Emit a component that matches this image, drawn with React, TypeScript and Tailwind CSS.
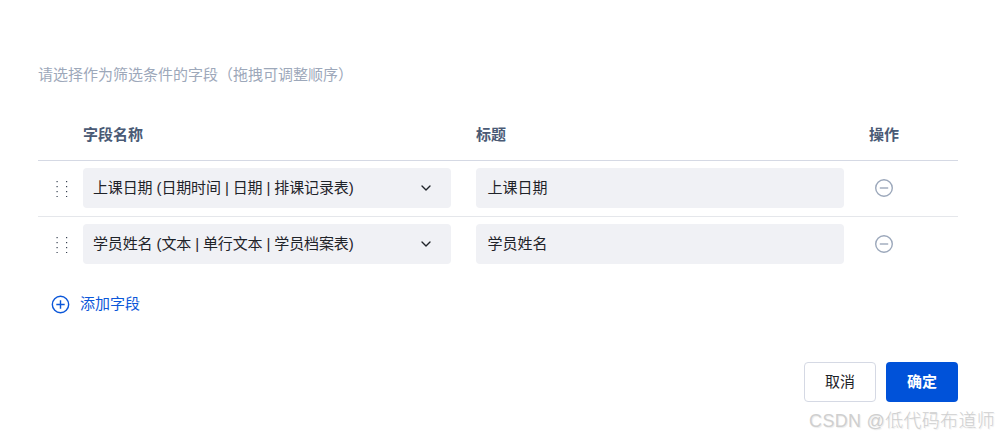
import { ChevronDown } from 'lucide-react';

const font = { fontFamily: '"Liberation Sans", "Noto Sans CJK SC", sans-serif' };

function DragHandle() {
  return (
    <svg width="12" height="17" viewBox="0 0 12 17" className="text-[#374151]">
      {[0, 1, 2, 3].map((i) => (
        <g key={i} fill="currentColor">
          <rect x="0.5" y={i * 5 + 1} width="1.2" height="1.2" />
          <rect x="10" y={i * 5 + 1} width="1.2" height="1.2" />
        </g>
      ))}
    </svg>
  );
}

function Row({ field, title }: { field: string; title: string }) {
  return (
    <div className="grid grid-cols-[45px_368px_368px_1fr] h-[56px] pt-[7px] items-start border-b border-[#e5e7eb] text-[15px] text-[#1f2329]">
      <div className="flex justify-center h-10 items-center pl-[2px]">
        <DragHandle />
      </div>
      <div className="h-10 rounded bg-[#f0f1f5] flex items-center justify-between pl-[10px] pr-[17px]">
        <span className="tracking-[-0.13px]">{field}</span>
        <ChevronDown className="w-4 h-4 text-[#1f2329]" strokeWidth={2} />
      </div>
      <div className="h-10 rounded bg-[#f0f1f5] flex items-center pl-[11.5px] ml-[25px] -mr-[25px]">
        <span>{title}</span>
      </div>
      <div className="flex h-10 items-center pl-[55px]">
        <svg width="20" height="20" viewBox="0 0 20 20" fill="none" stroke="#9ca8bb" strokeWidth="1.4">
          <circle cx="10" cy="10" r="8.3" />
          <path d="M5.8 10h8.4" />
        </svg>
      </div>
    </div>
  );
}

export default function App() {
  return (
    <div className="relative w-[998px] h-[439px] bg-white overflow-hidden" style={font}>
      <div className="pl-[38px] pr-[40px] pt-[65px]">
        <p className="text-[15px] leading-[20px] text-[#9da8ba]">请选择作为筛选条件的字段（拖拽可调整顺序）</p>

        <div className="grid grid-cols-[45px_393px_393px_1fr] mt-[26px] h-[50px] items-center border-b border-[#d5d9e4] text-[15px] font-bold text-[#4a5a75]">
          <div />
          <div>字段名称</div>
          <div>标题</div>
          <div>操作</div>
        </div>

        <Row field="上课日期 (日期时间 | 日期 | 排课记录表)" title="上课日期" />
        <div className="[&>div]:border-b-0">
          <Row field="学员姓名 (文本 | 单行文本 | 学员档案表)" title="学员姓名" />
        </div>

        <div className="flex items-center gap-[10px] mt-[13px] pl-[13px] h-[36px] text-[15px] text-[#0b57d9]">
          <svg width="19" height="19" viewBox="0 0 20 20" fill="none" stroke="#0b57d9" strokeWidth="1.5">
            <circle cx="10" cy="10" r="8.6" />
            <path d="M5.6 10h8.8M10 5.6v8.8" />
          </svg>
          <span>添加字段</span>
        </div>

        <div className="flex justify-end gap-[10px] mt-[40px] text-[15px]">
          <button className="w-[72px] h-10 rounded border border-[#d5d9e4] bg-white text-[#1f2329]">取消</button>
          <button className="w-[72px] h-10 rounded bg-[#0052d9] text-white font-bold">确定</button>
        </div>
      </div>

      {/* watermark */}
      <div className="absolute right-[3px] top-[409px] text-[18px] leading-[24px] font-light tracking-[0.3px] text-[#cfcfcf] [text-shadow:1px_1px_1px_rgba(0,0,0,0.08)]">
        CSDN @低代码布道师
      </div>
    </div>
  );
}
